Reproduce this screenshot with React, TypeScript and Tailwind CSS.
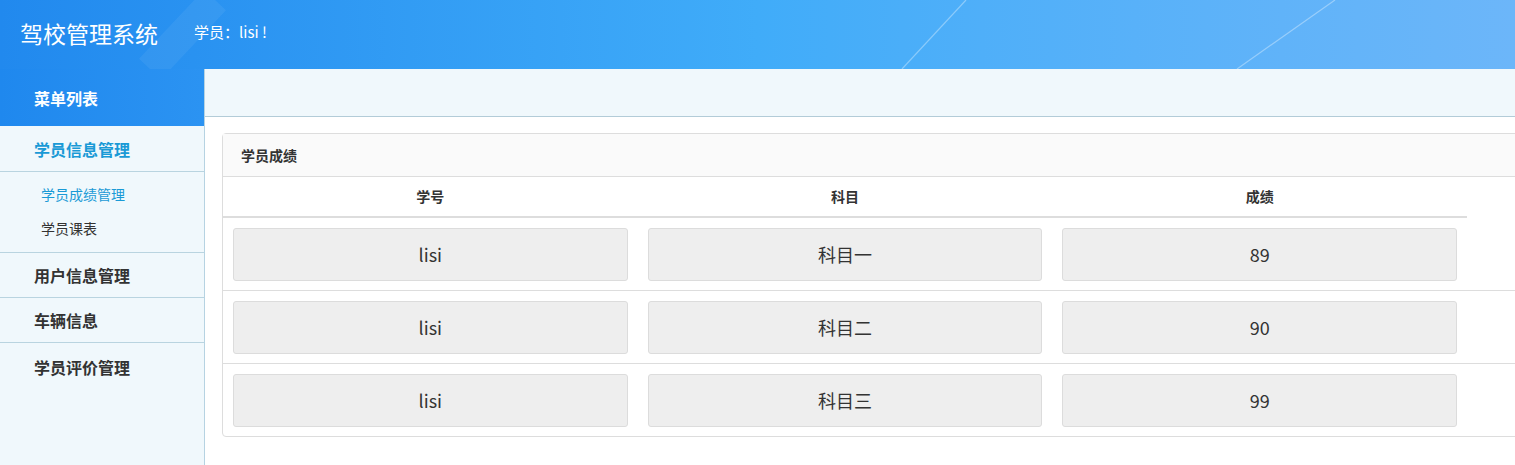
import React from 'react';

const rows = [
  { id: 'lisi', subject: '科目一', score: '89' },
  { id: 'lisi', subject: '科目二', score: '90' },
  { id: 'lisi', subject: '科目三', score: '99' },
];

function HeaderLines() {
  return (
    <svg className="absolute inset-0 h-full w-full" viewBox="0 0 1515 69" preserveAspectRatio="none">
      <path d="M150 69 L215 0" stroke="rgba(255,255,255,0.06)" strokeWidth="30" />
      <path d="M902 69 L966 0" stroke="rgba(255,255,255,0.35)" strokeWidth="1.2" />
      <path d="M1237 69 L1335 0" stroke="rgba(255,255,255,0.35)" strokeWidth="1.2" />
    </svg>
  );
}

function Cell({ value }: { value: string }) {
  return (
    <div className="px-[10px]">
      <div className="flex h-[53px] items-center justify-center rounded-[3px] border border-[#dcdcdc] bg-[#eeeeee] text-[18px] text-[#333]">
        {value}
      </div>
    </div>
  );
}

export default function App() {
  return (
    <div
      className="h-[465px] w-[1515px] overflow-hidden bg-white"
      style={{ fontFamily: '"Noto Sans CJK SC", "Noto Sans", sans-serif' }}
    >
      {/* Top bar */}
      <div className="relative flex h-[69px] items-center bg-gradient-to-r from-[#2189ee] via-[#40acf9] to-[#6cb6f9]">
        <HeaderLines />
        <h1 className="relative ml-[20px] mb-[2px] text-[23px] font-normal leading-none text-white">驾校管理系统</h1>
        <span className="relative ml-[36px] mb-[4px] text-[15px] text-white">学员：lisi !</span>
      </div>

      <div className="flex">
        {/* Sidebar */}
        <div className="h-[396px] w-[205px] shrink-0 border-r border-[#b6d3e2] bg-[#f0f8fc]">
          <div className="relative flex h-[57px] items-center overflow-hidden bg-gradient-to-r from-[#1f88ee] to-[#2b93f2] pl-[34px] text-[16px] font-bold text-white">
            菜单列表
          </div>
          <div className="flex h-[46px] items-center border-b border-[#b9d4e0] pl-[34px] text-[16px] font-bold text-[#1a9ad6]">
            学员信息管理
          </div>
          <div className="flex h-[81px] flex-col justify-center gap-[13px] border-b border-[#b9d4e0] pl-[41px] pb-[2px] text-[14px]">
            <div className="text-[#1a9ad6]">学员成绩管理</div>
            <div className="text-[#333]">学员课表</div>
          </div>
          <div className="flex h-[45px] items-center border-b border-[#b9d4e0] pl-[34px] text-[16px] font-bold text-[#333]">
            用户信息管理
          </div>
          <div className="flex h-[45px] items-center border-b border-[#b9d4e0] pl-[34px] text-[16px] font-bold text-[#333]">
            车辆信息
          </div>
          <div className="flex h-[48px] items-center pl-[34px] text-[16px] font-bold text-[#333]">
            学员评价管理
          </div>
        </div>

        {/* Main */}
        <div className="flex-1">
          <div className="h-[48px] border-b border-[#b3ccd8] bg-[#f0f8fc]" />
          <div className="pl-[17px] pt-[16px]">
            <div className="w-[1320px] rounded-[4px] border border-[#dddddd]">
              <div className="flex h-[43px] items-center border-b border-[#dddddd] bg-[#fafafa] pl-[18px] text-[14px] font-bold text-[#333]">
                学员成绩
              </div>
              <div className="grid w-[1244px] grid-cols-3 border-b-2 border-[#dddddd] text-[14px] font-bold text-[#333]">
                <div className="flex h-[39px] items-center justify-center">学号</div>
                <div className="flex h-[39px] items-center justify-center">科目</div>
                <div className="flex h-[39px] items-center justify-center">成绩</div>
              </div>
              {rows.map((r, i) => (
                <div key={i} className={i < rows.length - 1 ? 'border-b border-[#dddddd]' : ''}>
                  <div className="grid h-[72px] w-[1244px] grid-cols-3 items-center">
                    <Cell value={r.id} />
                    <Cell value={r.subject} />
                    <Cell value={r.score} />
                  </div>
                </div>
              ))}
            </div>
          </div>
        </div>
      </div>
    </div>
  );
}
